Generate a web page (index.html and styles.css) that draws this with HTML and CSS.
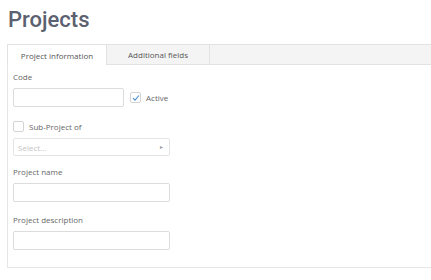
FILE: index.html
```html
<!DOCTYPE html>
<html lang="en">

<head>
    <meta charset="UTF-8">
    <meta name="viewport" content="width=device-width, initial-scale=1.0">
    <title>Projects</title>
    <link rel="stylesheet" href="styles.css">
</head>

<body>
    <h1 class="page-title">Projects</h1>

    <div class="tabs">
        <div class="tab active">Project information</div>
        <div class="tab">Additional fields</div>
    </div>

    <div class="panel">
        <div class="field field-code">
            <label class="label">Code</label>
            <div class="row">
                <input type="text" class="input input-short">
                <span class="check checked">
                    <svg width="8" height="8" viewBox="0 0 8 8">
                        <path d="M1 4.2 L3 6.2 L7 1.5" fill="none" stroke="#4a90d9" stroke-width="1.1" />
                    </svg>
                </span>
                <span class="check-label">Active</span>
            </div>
        </div>

        <div class="field">
            <div class="row">
                <span class="check"></span>
                <span class="check-label">Sub-Project of</span>
            </div>
            <div class="select">
                <span class="placeholder">Select...</span>
                <span class="arrow">&#9656;</span>
            </div>
        </div>

        <div class="field field-name">
            <label class="label">Project name</label>
            <input type="text" class="input">
        </div>

        <div class="field">
            <label class="label">Project description</label>
            <input type="text" class="input">
        </div>
    </div>
</body>

</html>
```

FILE: styles.css
```css
* {
    box-sizing: border-box;
}

body {
    margin: 0;
    padding: 0 0 0 7px;
    background-color: #fff;
    font-family: 'Open Sans', sans-serif;
    font-size: 8px;
    color: #666;
}

.page-title {
    font-family: Roboto, sans-serif;
    font-weight: 500;
    font-size: 22px;
    color: #5b6170;
    margin: 0;
    padding: 7px 0 0 1px;
    height: 44px;
}

.tabs {
    display: flex;
    height: 21px;
    background-color: #f4f4f4;
    border-top: 1px solid #e2e2e2;
    border-bottom: 1px solid #e2e2e2;
}

.tab {
    width: 103px;
    display: flex;
    align-items: center;
    justify-content: center;
    color: #555;
    border-right: 1px solid #e2e2e2;
}

.tab.active {
    width: 100px;
    background-color: #fff;
    border-left: 1px solid #e2e2e2;
    margin-bottom: -1px;
}

.panel {
    border-left: 1px solid #e6e6e6;
    border-bottom: 1px solid #e6e6e6;
    padding: 6px 0 17px 5px;
    height: 203px;
}

.field {
    display: flex;
    flex-direction: column;
    align-items: flex-start;
    margin-bottom: 10px;
}

.field-code {
    margin-bottom: 14px;
}

.field-name {
    margin-bottom: 12px;
}

.label {
    margin-bottom: 6px;
}

.row {
    display: flex;
    align-items: center;
}

.input {
    width: 157px;
    height: 19px;
    border: 1px solid #dcdcdc;
    border-radius: 2px;
    outline: none;
}

.input-short {
    width: 111px;
}

.check {
    width: 11px;
    height: 11px;
    border: 1px solid #d4d4d4;
    border-radius: 2px;
    display: flex;
    align-items: center;
    justify-content: center;
    background-color: #fff;
}

.input + .check {
    margin-left: 6px;
}

.check-label {
    margin-left: 5px;
}

.select {
    margin-top: 6px;
    width: 157px;
    height: 18px;
    border: 1px solid #e4e4e4;
    border-radius: 2px;
    display: flex;
    align-items: center;
    justify-content: space-between;
    padding: 0 6px 0 4px;
}

.placeholder {
    color: #c4c4c4;
}

.arrow {
    color: #999;
    font-size: 6px;
}
```
